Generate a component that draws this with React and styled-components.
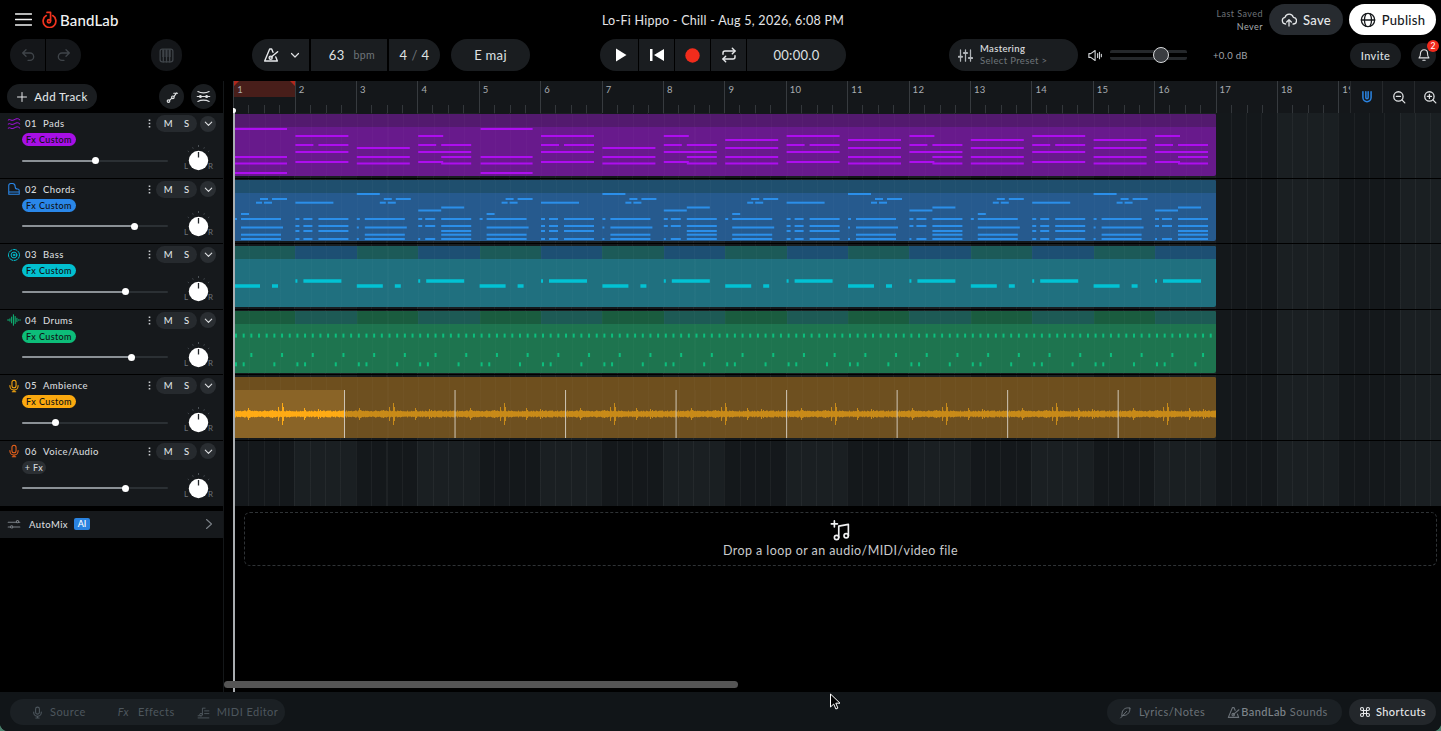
import styled, { createGlobalStyle } from "styled-components";

const BAR = 61.4;
const CLIP_W = 982.5;

const GlobalStyle = createGlobalStyle`
  html, body {
    margin: 0;
    padding: 0;
    background: #4a7f6c;
    overflow: hidden;
  }
  * {
    box-sizing: border-box;
  }
  body {
    font-family: "Lato", "Noto Sans", sans-serif;
    color: #e6e8ea;
  }
`;

const Shell = styled.div`
  position: relative;
  width: 1441px;
  height: 731px;
  display: flex;
  flex-direction: column;
  background: #000;
  border-radius: 0 0 8px 8px;
  overflow: hidden;
`;

/* ---------- header ---------- */

const Header = styled.header`
  height: 81px;
  flex: none;
`;

const TopRow = styled.div`
  height: 39px;
  padding: 4px 5px 4px 15px;
  display: grid;
  grid-template-columns: 1fr auto 1fr;
  align-items: center;
`;

const Brand = styled.div`
  display: flex;
  align-items: center;
`;

const Logo = styled.span`
  display: flex;
  align-items: center;
  margin-left: 9px;
  gap: 2px;
  font-size: 15px;
  font-weight: 500;
  letter-spacing: 0.15px;
  color: #f2f3f4;
`;

const Title = styled.div`
  font-size: 12.5px;
  letter-spacing: 0.27px;
  color: #e4e5e7;
  margin: 1px 5px 0 0;
`;

const Actions = styled.div`
  display: flex;
  align-items: center;
  justify-content: flex-end;
`;

const SavedInfo = styled.div`
  font-size: 9px;
  line-height: 13px;
  text-align: right;
  letter-spacing: 0.45px;
  color: #6d7378;
  margin-right: 6px;

  b {
    display: block;
    font-weight: 400;
    color: #a8adb1;
  }
`;

const HeaderButton = styled.button`
  height: 31px;
  width: ${(p) => p.$width}px;
  margin-left: ${(p) => p.$gap || 0}px;
  display: flex;
  align-items: center;
  justify-content: center;
  gap: 6px;
  border: 0;
  border-radius: 16px;
  font: 500 13px "Lato", sans-serif;
  letter-spacing: 0.3px;
  background: ${(p) => (p.$light ? "#fff" : "#272b30")};
  color: ${(p) => (p.$light ? "#15181b" : "#e6e8ea")};
`;

const ToolRow = styled.div`
  height: 32px;
  padding: 0 5px 0 10px;
  display: flex;
  align-items: center;
`;

const Pill = styled.div`
  display: flex;
  height: 32px;
  gap: ${(p) => (p.$tight ? 1 : 2)}px;
  margin-left: ${(p) => p.$gap || 0}px;
  border-radius: 16px;
  overflow: hidden;
`;

const Segment = styled.div`
  width: ${(p) => p.$width}px;
  padding-left: ${(p) => p.$nudge || 0}px;
  display: flex;
  align-items: center;
  justify-content: center;
  gap: ${(p) => p.$inner || 0}px;
  background: ${(p) => (p.$dim ? "#141619" : "#1a1d20")};
  font-size: 13px;
  letter-spacing: 0.3px;
  color: #dfe1e3;
`;

const Unit = styled.span`
  font-size: 10.5px;
  color: #6f757a;
  letter-spacing: 0.4px;
`;

const Slash = styled.span`
  color: #6f757a;
`;

const Mastering = styled.div`
  width: 129px;
  height: 32px;
  margin-left: 103px;
  padding-left: 9px;
  display: flex;
  align-items: center;
  gap: 7px;
  border-radius: 16px;
  background: #1a1d20;
`;

const MasteringText = styled.div`
  font-size: 9.5px;
  line-height: 12.5px;
  letter-spacing: 0.35px;
  color: #e0e2e4;
  font-weight: 500;

  span {
    display: block;
    font-weight: 400;
    color: #6f757a;
  }
`;

const VolumeIcon = styled.span`
  display: flex;
  margin-left: 9px;
  width: 16px;
`;

const VolumeSlider = styled.div`
  position: relative;
  width: 77px;
  height: 10px;
  margin-left: 7px;
  border-top: 3px solid #25282b;
  border-bottom: 3px solid #25282b;
  border-radius: 2px;
`;

const VolumeThumb = styled.span`
  position: absolute;
  left: 43px;
  top: -6px;
  width: 16px;
  height: 16px;
  border-radius: 50%;
  border: 1.5px solid #d8dadc;
  background: #3a3d41;
`;

const Gain = styled.div`
  margin-left: 26px;
  font-size: 9.5px;
  letter-spacing: 0.3px;
  color: #a0a5a9;
`;

const Invite = styled.div`
  margin-left: auto;
  width: 51px;
  height: 25px;
  border-radius: 13px;
  background: #1a1d20;
  display: flex;
  align-items: center;
  justify-content: center;
  font-size: 11px;
  font-weight: 500;
  letter-spacing: 0.35px;
  color: #dfe1e3;
`;

const Bell = styled.div`
  position: relative;
  width: 25px;
  height: 25px;
  margin-left: 10px;
  border-radius: 50%;
  background: #1a1d20;
  display: flex;
  align-items: center;
  justify-content: center;
`;

const BellBadge = styled.span`
  position: absolute;
  top: -3px;
  right: -3px;
  width: 12px;
  height: 12px;
  border-radius: 50%;
  background: #f0291c;
  color: #fff;
  font-size: 8.5px;
  line-height: 12px;
  text-align: center;
`;

/* ---------- main ---------- */

const Main = styled.main`
  position: relative;
  flex: 1;
  min-height: 0;
  display: flex;
`;

const Sidebar = styled.aside`
  width: 224px;
  margin-right: 9px;
  flex: none;
  border-right: 1px solid #141719;
`;

const AddRow = styled.div`
  height: 32px;
  padding: 3px 7px 4px;
  display: flex;
  align-items: center;
  gap: 7px;
`;

const AddTrack = styled.div`
  width: 90px;
  height: 25px;
  margin-right: auto;
  display: flex;
  align-items: center;
  justify-content: center;
  gap: 6px;
  border-radius: 13px;
  background: #1a1d20;
  font-size: 11.5px;
  font-weight: 500;
  letter-spacing: 0.4px;
  color: #dfe1e3;
`;

const RoundTool = styled.div`
  width: 25px;
  height: 25px;
  border-radius: 50%;
  background: #1a1d20;
  display: flex;
  align-items: center;
  justify-content: center;
`;

const TrackRow = styled.div`
  height: 65.6px;
  padding: 2px 7px 0 7px;
  background: #16191c;
  border-bottom: 1px solid #000;
`;

const TrackTop = styled.div`
  height: 17px;
  display: flex;
  align-items: center;
`;

const TrackIcon = styled.span`
  width: 14px;
  height: 14px;
  display: flex;
  flex: none;
  color: ${(p) => p.$color};
`;

const TrackNumber = styled.span`
  margin-left: 4px;
  width: 18px;
  font-size: 9.5px;
  font-weight: 500;
  letter-spacing: 0.4px;
  color: #d6d9dc;
`;

const TrackName = styled.span`
  font-size: 9.5px;
  font-weight: 500;
  letter-spacing: 0.4px;
  color: #d6d9dc;
`;

const Dots = styled.span`
  margin-left: auto;
  display: flex;
`;

const MuteSolo = styled.div`
  width: 41px;
  height: 17px;
  margin-left: 5px;
  display: flex;
  align-items: center;
  justify-content: space-around;
  padding: 0 2px;
  border-radius: 9px;
  background: #262a2e;
  font-size: 9.5px;
  font-weight: 500;
  color: #dfe1e3;
`;

const Expand = styled.div`
  width: 16px;
  height: 16px;
  margin-left: 3px;
  border-radius: 50%;
  background: #2a2e32;
  display: flex;
  align-items: center;
  justify-content: center;
`;

const FxBadge = styled.div`
  width: ${(p) => (p.$add ? 24 : 54)}px;
  height: 13px;
  margin: 1px 0 0 15px;
  border-radius: 7px;
  background: ${(p) => p.$color || "#2b2f33"};
  color: ${(p) => (p.$add ? "#d6d9dc" : "#101214")};
  font-size: 9px;
  font-weight: 500;
  line-height: 13px;
  text-align: center;
  letter-spacing: 0.4px;
`;

const MixRow = styled.div`
  margin: 5px 0 0 15px;
  height: 19px;
  display: flex;
  align-items: center;
`;

const Fader = styled.div`
  position: relative;
  width: 146px;
  height: 2px;
  border-radius: 1px;
  background: #2b3034;
`;

const FaderFill = styled.div`
  height: 2px;
  width: ${(p) => p.$value}px;
  border-radius: 1px;
  background: #8b9196;
`;

const FaderThumb = styled.span`
  position: absolute;
  top: -2.5px;
  left: ${(p) => p.$value - 3.5}px;
  width: 7px;
  height: 7px;
  border-radius: 50%;
  background: #fff;
`;

const Knob = styled.div`
  position: relative;
  width: 19px;
  height: 19px;
  margin-left: 21px;
`;

const KnobLabel = styled.span`
  position: absolute;
  top: 11px;
  ${(p) => (p.$right ? "right: -5px;" : "left: -5px;")}
  font-size: 8px;
  line-height: 9px;
  color: #6b7278;
`;

const AutoMix = styled.div`
  height: 27px;
  margin-top: 4px;
  padding: 0 8px 0 7px;
  display: flex;
  align-items: center;
  background: #16191c;
`;

const AutoMixLabel = styled.span`
  margin-left: 8px;
  font-size: 9.5px;
  font-weight: 500;
  letter-spacing: 0.4px;
  color: #d6d9dc;
`;

const AiBadge = styled.span`
  margin-left: 6px;
  width: 16px;
  height: 12px;
  border-radius: 2px;
  background: #2a83e0;
  color: #fff;
  font-size: 9px;
  font-weight: 500;
  line-height: 12px;
  text-align: center;
`;

const AutoMixArrow = styled.span`
  margin-left: auto;
  display: flex;
`;

/* ---------- timeline ---------- */

const Timeline = styled.section`
  position: relative;
  flex: 1;
  min-width: 0;
  overflow: hidden;
`;

const Ruler = styled.div`
  position: relative;
  height: 32px;
  padding-left: 0.3px;
  display: flex;
  background: #14171a;
  overflow: hidden;
`;

const RulerBar = styled.div`
  position: relative;
  flex: none;
  width: ${BAR}px;
  border-left: 1px solid #373b3f;
  padding: 3px 0 0 3px;
  font-size: 9.5px;
  line-height: 12px;
  letter-spacing: 0.3px;
  color: #a8adb1;
  background-image: linear-gradient(to right, transparent 14.4px, #33373b 14.4px, #33373b 15.4px, transparent 15.4px, transparent 29.7px, #33373b 29.7px, #33373b 30.7px, transparent 30.7px, transparent 45px, #33373b 45px, #33373b 46px, transparent 46px);
  background-size: 100% 8px;
  background-position: 0 100%;
  background-repeat: no-repeat;
`;

const LoopRegion = styled.span`
  position: absolute;
  left: 0;
  top: 0;
  width: 100%;
  height: 16px;
  background: #481e1a;

  &::before,
  &::after {
    content: "";
    position: absolute;
    top: 0;
    border-top: 5px solid #b3281c;
  }
  &::before {
    left: 0;
    border-right: 5px solid transparent;
  }
  &::after {
    right: 0;
    border-left: 5px solid transparent;
  }
`;

const RulerNumber = styled.span`
  position: relative;
`;

const ZoomTools = styled.div`
  position: absolute;
  top: 0;
  right: 0;
  height: 32px;
  display: flex;
  background: #14171a;
`;

const ZoomTool = styled.div`
  width: ${(p) => (p.$last ? 27 : 32)}px;
  border-left: 1px solid #26292c;
  display: flex;
  align-items: center;
  justify-content: ${(p) => (p.$last ? "flex-start" : "center")};
  padding-left: ${(p) => (p.$last ? 8 : 0)}px;
`;

const Lane = styled.div`
  height: 65.6px;
  padding-top: 1.4px;
  padding-left: 0.5px;
  border-bottom: 1px solid #000;
  background-color: #15191c;
  background-image:
    repeating-linear-gradient(to right, rgba(255, 255, 255, 0.045) 0 1px, transparent 1px ${BAR / 4}px),
    repeating-linear-gradient(to right, #14181b 0 ${BAR}px, #1a1f22 ${BAR}px ${BAR * 2}px);
`;

const Clip = styled.div`
  width: ${CLIP_W}px;
  height: 61.5px;
  display: flex;
  flex-direction: column;
  border-radius: 0 2px 2px 0;
  overflow: hidden;
  background: ${(p) => p.$body};
`;

const ClipHead = styled.div`
  height: 13px;
  flex: none;
  background-image:
    repeating-linear-gradient(to right, rgba(255, 255, 255, 0.025) 0 1px, transparent 1px ${BAR / 4}px),
    repeating-linear-gradient(to right, ${(p) => p.$a} 0 ${BAR}px, ${(p) => p.$b} ${BAR}px ${BAR * 2}px);
`;

const ClipBody = styled.div`
  position: relative;
  flex: 1;
  background-image: repeating-linear-gradient(to right, rgba(255, 255, 255, 0.02) 0 1px, transparent 1px ${BAR / 4}px);

  svg {
    display: block;
  }
`;

const DropZone = styled.div`
  height: 54px;
  margin: 5.4px 4px 0 11px;
  display: flex;
  flex-direction: column;
  align-items: center;
  justify-content: center;
  gap: 2px;
  padding-top: 1px;
  border: 1px dashed #2f3336;
  border-radius: 6px;
  font-size: 12.5px;
  letter-spacing: 0.42px;
  color: #c9cbcd;
`;

const Playhead = styled.div`
  position: absolute;
  left: 0;
  top: 29px;
  bottom: 0;
  width: 1.5px;
  background: #a9adb0;

  &::before {
    content: "";
    position: absolute;
    left: -2px;
    top: -2px;
    width: 5px;
    height: 5px;
    border-radius: 50%;
    background: #fff;
  }
`;

const ScrollThumb = styled.div`
  position: absolute;
  left: 224px;
  bottom: 4px;
  width: 514px;
  height: 7px;
  border-radius: 4px;
  background: #555;
`;

/* ---------- bottom bar ---------- */

const BottomBar = styled.footer`
  height: 39px;
  flex: none;
  padding: 7px 5px 6px 10px;
  display: flex;
  align-items: center;
  background: #111518;
`;

const DockGroup = styled.div`
  width: ${(p) => p.$width}px;
  margin-left: ${(p) => p.$gap || "0"};
  height: 26px;
  display: flex;
  align-items: center;
  border-radius: 13px;
  background: #1b2024;
`;

const DockItem = styled.span`
  display: flex;
  align-items: center;
  gap: ${(p) => p.$inner || 6}px;
  margin-left: ${(p) => p.$offset}px;
  font-size: 11px;
  letter-spacing: 0.45px;
  line-height: 12px;
  color: ${(p) => (p.$soft ? "#6b7278" : "#4d565d")};

  span {
    margin-top: -1px;
  }

  b {
    font-weight: 500;
    color: #7f868c;
  }
`;

const Shortcuts = styled.div`
  width: 87px;
  height: 26px;
  margin-left: 7px;
  padding-bottom: 1px;
  display: flex;
  align-items: center;
  justify-content: center;
  gap: 5px;
  border-radius: 13px;
  background: #23272b;
  font-size: 11px;
  font-weight: 500;
  letter-spacing: 0.4px;
  color: #e6e8ea;
`;

const Pointer = styled.svg`
  position: absolute;
  left: 829px;
  top: 693px;
`;

/* ---------- drawings ---------- */

const Stroke = ({ w = 14, h, color = "currentColor", sw = 1.2, vb, children }) => (
  <svg width={w} height={h || w} viewBox={vb || "0 0 24 24"} fill="none" stroke={color} strokeWidth={sw} strokeLinecap="round" strokeLinejoin="round">
    {children}
  </svg>
);

const Metronome = ({ size = 16, color = "#e6e8ea" }) => (
  <Stroke w={size} color={color} sw={2.100}>
    <path d="M15 8L13 3h-3L2.500 21h19l-2.300-6" />
    <path d="M12 15.500L22 7" />
    <circle cx="11.500" cy="16" r="2.300" />
  </Stroke>
);

const Chevron = ({ size = 12, color = "#dfe1e3", sw = 2.400 }) => (
  <Stroke w={size} color={color} sw={sw}>
    <path d="M5 9l7 7 7-7" />
  </Stroke>
);

const MicIcon = ({ color, size = 14, sw = 1.800 }) => (
  <Stroke w={size} color={color} sw={sw}>
    <rect x="8.500" y="2" width="7" height="13" rx="3.500" />
    <path d="M5 11v1a7 7 0 0 0 14 0v-1M12 19v3M9 22h6" />
  </Stroke>
);

const PadsIcon = () => (
  <Stroke sw={1.700}>
    <path d="M2 5c3-3 5 3 10 0s7-3 10 0M2 12c3-3 5 3 10 0s7-3 10 0M2 19c3-3 5 3 10 0s7-3 10 0" />
  </Stroke>
);

const ChordsIcon = () => (
  <Stroke sw={1.800}>
    <path d="M3 17V6a3.500 3.500 0 0 1 3.500-3.500h3C13 2.500 14 5 14 8c0 3 1 4 4 4 2 0 3 1.500 3 3v2zM3 17v4h18v-4" />
  </Stroke>
);

const BassIcon = () => (
  <Stroke sw={1.700}>
    <circle cx="12" cy="12" r="5" />
    <circle cx="12" cy="12" r="1.500" />
    <circle cx="12" cy="12" r="9.500" strokeDasharray="6 2.500" />
  </Stroke>
);

const DrumsIcon = () => (
  <Stroke sw={1.700}>
    <path d="M1 12h2M5 10v4M8 7v10M11 3v18M14 6v12M17 9v6M20 11.500v1M22 12h1" />
  </Stroke>
);

const tracks = [
  { no: "01", name: "Pads", color: "#a70fe6", value: 73, icon: <PadsIcon /> },
  { no: "02", name: "Chords", color: "#2a87e8", value: 112.500, icon: <ChordsIcon /> },
  { no: "03", name: "Bass", color: "#02bfcf", value: 103.500, icon: <BassIcon /> },
  { no: "04", name: "Drums", color: "#0dbd79", value: 109.500, icon: <DrumsIcon /> },
  { no: "05", name: "Ambience", color: "#fba90f", value: 33, icon: <MicIcon color="#fba90f" /> },
  { no: "06", name: "Voice/Audio", color: "#f0641b", value: 103.500, icon: <MicIcon color="#f0641b" />, noFx: true },
];

const KnobDrawing = () => (
  <svg width="27" height="27" viewBox="0 0 27 27" style={{ display: "block", margin: "-6px 0 0 -4px" }}>
    {[-50, -25, 25, 50].map((a) => (
      <line key={a} x1="13.500" y1="1" x2="13.500" y2="2.500" stroke="#4a5056" strokeWidth="0.800" transform={`rotate(${a} 13.500 15)`} />
    ))}
    <line x1="13.500" y1="0" x2="13.500" y2="2" stroke="#5b6167" strokeWidth="0.800" />
    <circle cx="13.500" cy="15.500" r="9.700" fill="#fff" />
    <line x1="13.500" y1="7" x2="13.500" y2="12.500" stroke="#22262a" strokeWidth="1.300" />
  </svg>
);

/* note data: [y, x1, x2] in px inside one bar, y from the top of the clip body */
const padsA = [[2, 1, 53], [30, 1, 53], [36.500, 1, 53], [46, 1, 53]];
const padsB = [[9, 0, 53], [18, 0, 18], [18, 23, 53], [25, 0, 53], [35, 0, 53]];
const padsC = [[21, 0, 53], [30, 0, 53], [36.500, 0, 53]];
const padsD = [[9, 0, 25], [18, 0, 18], [18, 23, 53], [25, 0, 53], [30, 23, 53], [35, 0, 25], [36.500, 23, 53]];
const padsE = [[13, 0, 53], [21, 0, 53], [30, 0, 53], [36.500, 0, 53]];
const padsBars = [padsA, padsB, padsC, padsD, padsA, padsB, padsC, padsD, padsE, padsB, padsE, padsD, padsE, padsB, padsE, padsD];

const chordA = [[6, 26, 34], [6, 38, 53], [9.700, 22, 28], [9.700, 30, 38], [21, 7, 15], [26, 0, 3], [26, 7, 47], [34.500, 7, 49], [41.700, 7, 47], [46, 7, 47]];
const chordB = [[9.700, 0, 38], [26, 0, 4], [26, 8, 17], [26, 23, 53], [33, 0, 4], [33, 8, 17], [33, 23, 53], [38, 0, 4], [38, 8, 17], [38, 23, 53], [46, 0, 4], [46, 8, 17], [46, 23, 53]];
const chordC = [[1, 0, 23], [6, 27, 35], [6, 39, 54], [9.700, 23, 29], [9.700, 31, 39], [26, 0, 3], [26, 8, 48], [34.500, 0, 2], [34.500, 8, 50], [41.700, 8, 48], [46, 0, 2], [46, 8, 48]];
const chordD = [[17.500, 0, 23], [14.500, 23, 46], [26, 0, 4], [26, 7, 17], [26, 23, 53], [33, 0, 4], [33, 7, 17], [33, 23, 53], [38, 23, 53], [41.700, 23, 53], [46, 0, 2], [46, 7, 17], [46, 23, 53]];
const chordBars = Array.from({ length: 16 }, (_, i) => [chordA, chordB, chordC, chordD][i % 4]);

const bassA = [[27, 0, 26], [27, 38, 44]];
const bassB = [[22, 0, 2], [22, 8, 46]];
const bassBars = Array.from({ length: 16 }, (_, i) => (i % 2 ? bassB : bassA));

const NoteRoll = ({ bars, color, h = 2 }) => (
  <svg width={CLIP_W} height="49" viewBox={`0 0 ${CLIP_W} 49`}>
    {bars.flatMap((notes, i) =>
      notes.map(([y, x1, x2], j) => (
        <rect key={`${i}-${j}`} x={i * BAR + x1} y={y - h / 2} width={x2 - x1} height={h} fill={color} />
      ))
    )}
  </svg>
);

const DrumRoll = () => {
  const hits = [];
  for (let x = 0; x < CLIP_W - 3; x += BAR / 8) hits.push([x, 11.600]);
  for (let x = BAR / 4; x < CLIP_W - 3; x += BAR / 2) hits.push([x, 31]);
  for (let i = 0; i < 16; i++) {
    [0, BAR / 8, BAR * 0.625].forEach((o) => hits.push([i * BAR + o, 40.300]));
  }
  return (
    <svg width={CLIP_W} height="49" viewBox={`0 0 ${CLIP_W} 49`}>
      {hits.map(([x, y], i) => (
        <rect key={i} x={x + 1} y={y - 2} width="2" height="4" fill="#0cbf7d" />
      ))}
    </svg>
  );
};

// one loop of the ambience sample, with fixed spikes and a seeded rough edge
const LOOP_W = BAR * 1.8;
const spikes = { 14: 6, 15: 4, 38: 4, 44: 7, 48: 11, 49: 7, 70: 6, 71: 4, 84: 5, 86: 4 };
const waveHeight = (x) => {
  const n = Math.sin(x * 12.9898) * 43758.5453;
  const noise = n - Math.floor(n);
  return spikes[x] || 2.500 + noise * 1.100;
};

const Waveform = () => {
  const lines = [[], []];
  for (let x = 0; x < CLIP_W; x++) {
    const inLoop = x % LOOP_W;
    lines[x < LOOP_W ? 0 : 1].push(`M${x + 0.500} ${24 - waveHeight(Math.floor(inLoop))}V${24 + waveHeight(Math.floor(inLoop))}`);
  }
  return (
    <svg width={CLIP_W} height="49" viewBox={`0 0 ${CLIP_W} 49`}>
      <rect width={LOOP_W} height="49" fill="#8a6427" />
      <path d={lines[0].join("")} stroke="#ffab14" strokeWidth="1" />
      <path d={lines[1].join("")} stroke="#c88a18" strokeWidth="1" />
      {Array.from({ length: 8 }, (_, i) => (
        <rect key={i} x={LOOP_W * (i + 1) - 0.500} width="1" height="49" fill="#cfc6b6" />
      ))}
    </svg>
  );
};

const clips = [
  { a: "#531a6e", b: "#531a6e", body: "#681a8c", roll: <NoteRoll bars={padsBars} color="#ae0df0" /> },
  { a: "#1f4f6e", b: "#1f4f6e", body: "#265a8e", roll: <NoteRoll bars={chordBars} color="#2b8fea" /> },
  { a: "#1c5a58", b: "#1d4f73", body: "#20707f", roll: <NoteRoll bars={bassBars} color="#02c2d4" h={3.500} /> },
  { a: "#1a5c3f", b: "#1d5a55", body: "#1e744f", roll: <DrumRoll /> },
  { a: "#6e4f1e", b: "#6e4f1e", body: "#6e5020", roll: <Waveform /> },
];

const App = () => {
  return (
    <Shell>
      <GlobalStyle />
      <Header>
        <TopRow>
          <Brand>
            <Stroke w={17} h={13} vb="0 0 17 13" color="#f2f3f4" sw={1.400}>
              <path d="M0.500 1h16M0.500 6.500h16M0.500 12h16" />
            </Stroke>
            <Logo>
              <Stroke w={17} color="#f0341f" sw={2.400}>
                <path d="M7.500 6.500a9 9 0 1 0 9 0" />
                <path d="M8.500 2h5v11.500" />
                <circle cx="11.300" cy="14.500" r="2.200" />
              </Stroke>
              BandLab
            </Logo>
          </Brand>
          <Title>Lo-Fi Hippo - Chill - Aug 5, 2026, 6:08 PM</Title>
          <Actions>
            <SavedInfo>
              Last Saved
              <b>Never</b>
            </SavedInfo>
            <HeaderButton $width={74}>
              <Stroke w={16} color="#e6e8ea" sw={1.900}>
                <path d="M7 18a5 5 0 0 1-1-9.900A6.500 6.500 0 0 1 18.500 8 5 5 0 0 1 18 18M12 21v-9M8.500 15l3.500-3.500 3.500 3.500" />
              </Stroke>
              Save
            </HeaderButton>
            <HeaderButton $width={87} $gap={6} $light>
              <Stroke w={16} color="#15181b" sw={1.900}>
                <circle cx="12" cy="12" r="10" />
                <path d="M2 12h20M9 2.500c-3 6-3 13 0 19M15 2.500c3 6 3 13 0 19" />
              </Stroke>
              Publish
            </HeaderButton>
          </Actions>
        </TopRow>
        <ToolRow>
          <Pill $tight>
            <Segment $width={35} $dim>
              <Stroke w={16} color="#3f4449" sw={2}>
                <path d="M9 14L4 9l5-5M4 9h11a5 5 0 0 1 0 11h-3" />
              </Stroke>
            </Segment>
            <Segment $width={35} $dim>
              <Stroke w={16} color="#3f4449" sw={2}>
                <path d="M15 14l5-5-5-5M20 9H9a5 5 0 0 0 0 11h3" />
              </Stroke>
            </Segment>
          </Pill>
          <Pill $gap={70}>
            <Segment $width={31} $dim>
              <Stroke w={17} color="#3f4449" sw={1.800}>
                <rect x="3" y="3" width="18" height="18" rx="3" />
                <path d="M7.500 21v-7M12 21v-7M16.500 21v-7" />
                <path d="M7.500 14V3M12 14V3M16.500 14V3" strokeWidth="3" strokeLinecap="butt" />
              </Stroke>
            </Segment>
          </Pill>
          <Pill $gap={70}>
            <Segment $width={57} $inner={10} $nudge={2}>
              <Metronome />
              <Chevron />
            </Segment>
            <Segment $width={76} $inner={9} $nudge={6}>
              63 <Unit>bpm</Unit>
            </Segment>
            <Segment $width={51} $inner={4}>
              4 <Slash>/</Slash> 4
            </Segment>
          </Pill>
          <Pill $gap={11}>
            <Segment $width={79}>E maj</Segment>
          </Pill>
          <Pill $gap={70} $tight>
            <Segment $width={38} $nudge={4}>
              <svg width="12" height="14" viewBox="0 0 12 14">
                <path d="M1 0.500L11.500 7 1 13.500z" fill="#fff" />
              </svg>
            </Segment>
            <Segment $width={35}>
              <svg width="14" height="12" viewBox="0 0 14 12">
                <path d="M0 0h2.500v12H0zM14 0v12L4 6z" fill="#fff" />
              </svg>
            </Segment>
            <Segment $width={35}>
              <svg width="15" height="15" viewBox="0 0 15 15">
                <circle cx="7.500" cy="7.500" r="7.200" fill="#f12c1c" />
              </svg>
            </Segment>
            <Segment $width={35}>
              <Stroke w={16} color="#e6e8ea" sw={2.200}>
                <path d="M17 2l4 4-4 4" />
                <path d="M3 11V9a3 3 0 0 1 3-3h15M7 22l-4-4 4-4" />
                <path d="M21 13v2a3 3 0 0 1-3 3H3" />
              </Stroke>
            </Segment>
            <Segment $width={99}>00:00.0</Segment>
          </Pill>
          <Mastering>
            <Stroke w={15} color="#b0b4b8" sw={2}>
              <path d="M4 3v18M12 3v18M20 3v18" />
              <path d="M1.500 14h5M9.500 8h5M17.500 16h5" strokeWidth="3.500" />
            </Stroke>
            <MasteringText>
              Mastering
              <span>Select Preset &gt;</span>
            </MasteringText>
          </Mastering>
          <VolumeIcon>
            <Stroke w={15} color="#d0d3d6" sw={1.800}>
              <path d="M3 9v6h3l7 5V4L6 9zM17 9v6M20 7v10M23 10v4" />
            </Stroke>
          </VolumeIcon>
          <VolumeSlider>
            <VolumeThumb />
          </VolumeSlider>
          <Gain>+0.0 dB</Gain>
          <Invite>Invite</Invite>
          <Bell>
            <Stroke w={14} color="#dfe1e3" sw={1.900}>
              <path d="M6 9a6 6 0 0 1 12 0c0 6 2.500 8 2.500 8h-17S6 15 6 9zM10 21h4" />
            </Stroke>
            <BellBadge>2</BellBadge>
          </Bell>
        </ToolRow>
      </Header>
      <Main>
        <Sidebar>
          <AddRow>
            <AddTrack>
              <Stroke w={12} color="#e6e8ea" sw={2}>
                <path d="M12 3v18M3 12h18" />
              </Stroke>
              Add Track
            </AddTrack>
            <RoundTool>
              <Stroke w={14} color="#dfe1e3" sw={2}>
                <circle cx="6" cy="19" r="2.200" />
                <circle cx="13.500" cy="12.500" r="2.200" />
                <path d="M7.800 17.500l4-3.500M15.500 11L20 5M15 5.500h6.500" />
              </Stroke>
            </RoundTool>
            <RoundTool>
              <Stroke w={15} color="#dfe1e3" sw={1.800}>
                <path d="M3 4c5 3 13 3 18 0M3 20c5-3 13-3 18 0M2 12h20" />
                <circle cx="7" cy="12" r="1.500" fill="#dfe1e3" />
                <circle cx="17" cy="12" r="1.500" fill="#dfe1e3" />
              </Stroke>
            </RoundTool>
          </AddRow>
          {tracks.map((t) => (
            <TrackRow key={t.no}>
              <TrackTop>
                <TrackIcon $color={t.color}>{t.icon}</TrackIcon>
                <TrackNumber>{t.no}</TrackNumber>
                <TrackName>{t.name}</TrackName>
                <Dots>
                  <svg width="3" height="9" viewBox="0 0 3 9">
                    <path d="M0.700 0.500h1.600v1.600H0.700zM0.700 3.700h1.600v1.600H0.700zM0.700 6.900h1.600v1.600H0.700z" fill="#c9cccf" />
                  </svg>
                </Dots>
                <MuteSolo>
                  <span>M</span>
                  <span>S</span>
                </MuteSolo>
                <Expand>
                  <Chevron size={11} />
                </Expand>
              </TrackTop>
              {t.noFx ? <FxBadge $add>+ Fx</FxBadge> : <FxBadge $color={t.color}>Fx Custom</FxBadge>}
              <MixRow>
                <Fader>
                  <FaderFill $value={t.value} />
                  <FaderThumb $value={t.value} />
                </Fader>
                <Knob>
                  <KnobDrawing />
                  <KnobLabel>L</KnobLabel>
                  <KnobLabel $right>R</KnobLabel>
                </Knob>
              </MixRow>
            </TrackRow>
          ))}
          <AutoMix>
            <Stroke w={14} color="#7b8187" sw={1.800}>
              <path d="M2 9h14M20 9h2M2 17h3M11 17h11" />
              <circle cx="18" cy="8" r="2" />
              <circle cx="8" cy="17" r="2" />
            </Stroke>
            <AutoMixLabel>AutoMix</AutoMixLabel>
            <AiBadge>AI</AiBadge>
            <AutoMixArrow>
              <Stroke w={12} color="#7b8187" sw={2.200}>
                <path d="M7 3l10 9-10 9" />
              </Stroke>
            </AutoMixArrow>
          </AutoMix>
        </Sidebar>
        <Timeline>
          <Ruler>
            {Array.from({ length: 20 }, (_, i) => (
              <RulerBar key={i}>
                {i === 0 && <LoopRegion />}
                <RulerNumber>{i + 1}</RulerNumber>
              </RulerBar>
            ))}
            <ZoomTools>
              <ZoomTool>
                <Stroke w={14} color="#2a83e0" sw={2.600}>
                  <path d="M5 3v10a7 7 0 0 0 14 0V3M10 3v10a2 2 0 0 0 4 0V3" />
                </Stroke>
              </ZoomTool>
              <ZoomTool>
                <Stroke w={14} color="#dfe1e3" sw={2.200}>
                  <circle cx="11" cy="11" r="8" />
                  <path d="M7.500 11h7M17 17l5 5" />
                </Stroke>
              </ZoomTool>
              <ZoomTool $last>
                <Stroke w={14} color="#dfe1e3" sw={2.200}>
                  <circle cx="11" cy="11" r="8" />
                  <path d="M7.500 11h7M11 7.500v7M17 17l5 5" />
                </Stroke>
              </ZoomTool>
            </ZoomTools>
          </Ruler>
          {clips.map((c, i) => (
            <Lane key={i}>
              <Clip $body={c.body}>
                <ClipHead $a={c.a} $b={c.b} />
                <ClipBody>{c.roll}</ClipBody>
              </Clip>
            </Lane>
          ))}
          <Lane />
          <DropZone>
            <Stroke w={21} color="#f0f1f2" sw={1.900}>
              <path d="M10 20V7l11-2v13" />
              <circle cx="7.500" cy="20" r="2.500" />
              <circle cx="18.500" cy="18" r="2.500" />
              <path d="M5 1v7M1.500 4.500h7" />
            </Stroke>
            Drop a loop or an audio/MIDI/video file
          </DropZone>
          <Playhead />
        </Timeline>
        <ScrollThumb />
      </Main>
      <BottomBar>
        <DockGroup $width={275}>
          <DockItem $offset={21}>
            <MicIcon color="#4d565d" size={13} sw={2} />
            <span>Source</span>
          </DockItem>
          <DockItem $offset={32} $inner={9}>
            <i>Fx</i>
            <span>Effects</span>
          </DockItem>
          <DockItem $offset={22} $inner={7}>
            <Stroke w={13} color="#4d565d" sw={1.800}>
              <path d="M10 16V4h5M2 22h20M2 18h6M14 9h8M14 14h8" />
              <circle cx="7.500" cy="16" r="2.500" />
            </Stroke>
            <span>MIDI Editor</span>
          </DockItem>
        </DockGroup>
        <DockGroup $width={235} $gap="auto">
          <DockItem $offset={12} $inner={7} $soft>
            <Stroke w={13} color="#6b7278" sw={1.800}>
              <path d="M20 4c-6-2-12 1-14 7l-1 7 7-1c6-2 9-8 8-13zM3 22L14 10" />
            </Stroke>
            <span>Lyrics/Notes</span>
          </DockItem>
          <DockItem $offset={22} $inner={1} $soft>
            <Metronome size={13} color="#6b7278" />
            <span>
              <b>BandLab</b> Sounds
            </span>
          </DockItem>
        </DockGroup>
        <Shortcuts>
          <Stroke w={12} color="#e6e8ea" sw={2.200}>
            <path d="M9 9V6a3 3 0 1 0-3 3h12a3 3 0 1 0-3-3v12a3 3 0 1 0 3-3H6a3 3 0 1 0 3 3z" />
          </Stroke>
          Shortcuts
        </Shortcuts>
      </BottomBar>
      <Pointer width="13" height="18" viewBox="0 0 13 18">
        <path d="M1.500 1v13l3.200-3 2.200 5 2-0.900-2.100-4.900h4.200z" fill="#000" stroke="#fff" strokeWidth="1" />
      </Pointer>
    </Shell>
  );
};

export default App;
